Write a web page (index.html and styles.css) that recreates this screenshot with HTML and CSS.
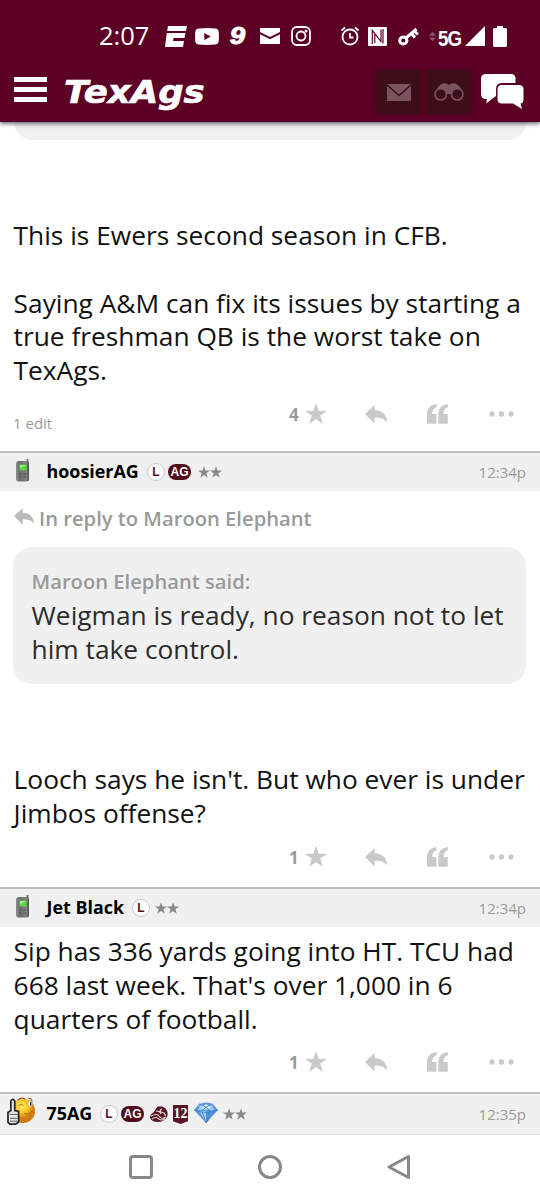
FILE: index.html
```html
<!DOCTYPE html>
<html lang="en">
<head>
<meta charset="utf-8">
<meta name="viewport" content="width=device-width">
<title>TexAgs</title>
<link rel="stylesheet" href="styles.css">
</head>
<body>
<svg class="defs" aria-hidden="true">
  <linearGradient id="case"><stop offset="0" stop-color="#8b8e8d"/><stop offset=".3" stop-color="#696d6c"/><stop offset=".8" stop-color="#808281"/><stop offset="1" stop-color="#474c4a"/></linearGradient>
  <radialGradient id="face" cx=".45" cy=".3"><stop offset="0" stop-color="#ffed68"/><stop offset=".6" stop-color="#f7c01e"/><stop offset="1" stop-color="#cd7d13"/></radialGradient>
  <symbol id="star" viewBox="0 0 22 21"><path d="M11 0l2.7 7.8H22l-6.7 4.8L17.8 21 11 15.9 4.2 21l2.5-8.4L0 7.800h8.300z"/></symbol>
  <symbol id="reply" viewBox="0 0 22 19"><path d="M0 9L9.600 0v5.200C17.500 5.500 22 9.500 22 17.300 19 13.500 15.500 12.500 9.600 12.700V18.500z"/></symbol>
  <symbol id="quote" viewBox="0 0 21 20"><path d="M9.500 0v3.500C6.500 4.300 5.300 6.200 5.200 10h4.300v9.700H0V11C0 4.500 3 .8 9.500 0z"/><path d="M20.800 0v3.500c-3 .8-4.200 2.700-4.300 6.500h4.300v9.700h-9.500V11c0-6.500 3-10.200 9.500-11z"/></symbol>
  <symbol id="dots" viewBox="0 0 26 6"><circle cx="3" cy="3" r="2.700"/><circle cx="12.500" cy="3" r="2.700"/><circle cx="22" cy="3" r="2.700"/></symbol>
  <symbol id="phone" viewBox="0 0 14 23"><path d="M10.500 0h2v3h-2z" fill="#777"/><rect y="2" width="13" height="20.500" rx="2.500" fill="url(#case)"/><path d="M3.500 5.500h7v6h-7z" fill="#5ed546"/><path d="M4 6h6L4 9z" fill="#a4ed8e"/><path d="M3 15h2.500m2 0H10m-7 3h2.500m2 0H10" stroke="#555957" stroke-width="1.200"/></symbol>
</svg>

<header class="top">
  <div class="status">
    <span class="clock">2:07</span>
    <svg class="s-espn" viewBox="0 0 22 21"><path d="M3 0h19l-1 5H2.200zM1.800 7h18.700l-1 5h-11l-.5 3h11l-1 6H0z"/></svg>
    <svg class="s-video" viewBox="0 0 24 17"><path fill-rule="evenodd" d="M4 .4Q12-.4 20 .4q3.500.2 3.700 3.600.5 4.500 0 9-.2 3.300-3.700 3.600-8 .8-16 0Q.5 16.300.3 13q-.5-4.500 0-9Q.5.600 4 .4zM9.300 5v7l6.500-3.500z"/></svg>
    <span class="nine">9</span>
    <svg class="s-mail" viewBox="0 0 20 16"><path d="M0 0h20v4l-10 5L0 4zM0 6.300l10 5 10-5V16H0z"/></svg>
    <svg class="s-camera" viewBox="0 0 20 20"><rect x="1" y="1" width="18" height="18" rx="5"/><circle cx="10" cy="10" r="4.500"/><circle cx="15" cy="5" r=".6"/></svg>
    <svg class="s-alarm" viewBox="0 0 20 20"><circle cx="10" cy="11" r="7.500"/><path d="M10 7v4.500h3.500M1.500 4.500L5 1.500m13.500 3L15 1.500"/></svg>
    <svg class="s-nfc" viewBox="0 0 19 19"><rect width="19" height="19" rx="1"/><path d="M4.300 17V3.500L13 14.500V2.500M6.800 16V7.500M15 16.500V2" fill="none" stroke="#5c0025" stroke-width="1.200"/></svg>
    <svg class="s-key" viewBox="0 0 21 19"><circle cx="5.300" cy="13.500" r="3.600"/><path d="M8 11L18.500 2m-5 4.500l3.500 4m-.7-6.500L20 7.500"/></svg>
    <svg class="s-updown" viewBox="0 0 8 11"><path d="M0 4.500L4 0l4 4.500zM0 6.500L4 11l4-4.500z"/></svg>
    <span class="fiveg">5G</span>
    <svg class="s-signal" viewBox="0 0 20 20"><path d="M20 0v20H0z"/></svg>
    <svg class="s-battery" viewBox="0 0 14 21"><path d="M4 0h6v2h2.500q1.500 0 1.500 1.500v16q0 1.500-1.500 1.500h-11Q0 21 0 19.500v-16Q0 2 1.500 2H4z"/></svg>
  </div>
  <nav class="bar">
    <div class="menu"><i></i><i></i><i></i></div>
    <span class="logo">TexAgs</span>
    <div class="tile"><svg class="t-mail" viewBox="0 0 24 17"><path d="M0 0h24L12 10.500zM0 2l12 10.500L24 2v15H0z"/></svg></div>
    <div class="tile"><svg class="t-eyes" viewBox="0 0 30 18"><path d="M3 6Q6 0 11 .2q3 0 3 1.500h2q0-1.500 3-1.500Q24 0 27 6l-9 5h-6z"/><circle cx="6.700" cy="11.300" r="5.700"/><circle cx="23.300" cy="11.300" r="5.700"/></svg></div>
    <svg class="chat" viewBox="0 0 43 35"><path d="M5 0h25q4.500 0 4.500 4.500V9H21q-6 0-6 6v7l-10 7.500 1-4.500H5q-5 0-5-5V5q0-5 5-5z"/><path d="M21 11h17q4.500 0 4.500 4.500V25q0 4.500-3 4.500L41 35l-9-5.500H21q-4.500 0-4.500-4.500v-9.500Q16.500 11 21 11z"/></svg>
  </nav>
</header>

<main>
  <article class="post post-first">
    <div class="quote-end"></div>
    <p class="text first-text">This is Ewers second season in CFB.<br><br>Saying A&amp;M can fix its issues by starting a<br>true freshman QB is the worst take on<br>TexAgs.</p>
    <div class="actions"><span class="edit">1 edit</span><b>4</b><svg class="a-star"><use href="#star"/></svg><svg class="a-reply"><use href="#reply"/></svg><svg class="a-quote"><use href="#quote"/></svg><svg class="a-dots"><use href="#dots"/></svg></div>
  </article>

  <article class="post post-second">
    <div class="author"><span class="avatar"><svg class="phone"><use href="#phone"/></svg></span><strong class="n1">hoosierAG</strong><span class="lb">L</span><span class="ag">AG</span><span class="stars"><svg><use href="#star"/></svg><svg><use href="#star"/></svg></span><time>12:34p</time></div>
    <div class="reply-to"><svg><use href="#reply"/></svg><span>In reply to Maroon Elephant</span></div>
    <blockquote><cite>Maroon Elephant said:</cite><p class="text">Weigman is ready, no reason not to let<br>him take control.</p></blockquote>
    <p class="text second-text">Looch says he isn't. But who ever is under<br>Jimbos offense?</p>
    <div class="actions"><b>1</b><svg class="a-star"><use href="#star"/></svg><svg class="a-reply"><use href="#reply"/></svg><svg class="a-quote"><use href="#quote"/></svg><svg class="a-dots"><use href="#dots"/></svg></div>
  </article>

  <article class="post post-third">
    <div class="author"><span class="avatar"><svg class="phone"><use href="#phone"/></svg></span><strong class="n2">Jet Black</strong><span class="lb">L</span><span class="stars tight"><svg><use href="#star"/></svg><svg><use href="#star"/></svg></span><time>12:34p</time></div>
    <p class="text third-text">Sip has 336 yards going into HT. TCU had<br>668 last week. That's over 1,000 in 6<br>quarters of football.</p>
    <div class="actions"><b>1</b><svg class="a-star"><use href="#star"/></svg><svg class="a-reply"><use href="#reply"/></svg><svg class="a-quote"><use href="#quote"/></svg><svg class="a-dots"><use href="#dots"/></svg></div>
  </article>

  <div class="author last"><span class="avatar"><svg class="thumb" viewBox="0 0 30 30"><circle cx="16.500" cy="14.500" r="12.500" fill="url(#face)"/><path d="M11 3.500q4-4 8-1m3-1q3-1 4 3" fill="none" stroke="#a95622" stroke-width="1.300"/><ellipse cx="24" cy="7" rx="2.300" ry="3.500" fill="#fff" stroke="#b98222" stroke-width=".6"/><path d="M24.500 5v4" stroke="#223" stroke-width="1.500"/><path d="M12 9q3-3 5 0M18 17q5 2 8-3" fill="none" stroke="#a66312"/><path d="M4 4q2-3 4 0v10l4 1v11l-3 2H3l-2-2V16l3-2z" fill="#e6e8e8" stroke="#262626" stroke-width="1.800"/><path d="M3 18h8m-8 4h8m-8 3h8" stroke="#555"/></svg></span><strong class="n3">75AG</strong><span class="lb">L</span><span class="ag">AG</span><svg class="ring" viewBox="0 0 19 17"><path d="M8 1q4-2 8 1 4 4 2 9-3 5-9 5-6 0-8-4 0-4 4-6z" fill="#5c1626"/><path d="M2 10q6-3 8 0 3 4 7 1M3 13q4-3 7 0 3 2 6 0M7 5q4 0 5 3M13 3q-3 1-1 3 5 1 4 4" fill="none" stroke="#e7dcde" stroke-width="1.200"/></svg><span class="shield">12</span><svg class="gem" viewBox="0 0 24 21"><path d="M5 2q7-3 14 0l5 6-12 13L0 8z" fill="#5c97e0"/><path d="M5 2L3 8h18l-2-6-7 2zM5 9l7 11V9z" fill="#9ccdf6"/><path d="M12 2l5 4H7z" fill="#e4f8ff"/><path d="M0 8q12 5 24 0M5 2l7 3 7-3M3 8l3-5m12 0l3 5-9 13M8 9l4 12M12 5l-4 4m4-4l4 4-4 12" fill="none" stroke="#3976c2" stroke-width=".7"/></svg><span class="stars tight"><svg><use href="#star"/></svg><svg><use href="#star"/></svg></span><time>12:35p</time></div>
</main>

<footer class="system-nav">
  <svg viewBox="0 0 26 26"><rect x="2.500" y="2.500" width="21" height="21" rx="2.500"/></svg>
  <svg viewBox="0 0 26 26"><circle cx="13" cy="13" r="10.500"/></svg>
  <svg viewBox="0 0 26 26"><path d="M22.500 2.500v21L3 13z"/></svg>
</footer>
</body>
</html>
```

FILE: styles.css
```css
* { box-sizing: border-box; }
body { margin: 0; width: 540px; height: 1200px; overflow: hidden; background: #fff; color: #111; font-family: "Open Sans", sans-serif; display: flex; flex-direction: column; }
p, blockquote { margin: 0; }
svg { display: block; flex: none; }
.defs { position: absolute; width: 0; height: 0; }

.top { height: 122px; flex: none; background: #5c0025; box-shadow: 0 2px 4px #0008; position: relative; color: #fff; }
.status { height: 64px; padding: 8px 0 0 99px; display: flex; align-items: center; fill: #fff; white-space: nowrap; }
.clock { width: 66px; font-size: 25.5px; line-height: 30px; font-weight: 400; margin-top: -2px; }
.s-espn { width: 22px; height: 21px; }
.s-video { width: 24px; height: 17px; margin-left: 8px; }
.nine { width: 17px; margin: 0 0 0 12px; font: italic 700 24px/28px "Liberation Sans", Arial, sans-serif; -webkit-text-stroke: 1px #fff; transform: scaleX(1.15); }
.s-mail { width: 20px; height: 16px; margin-left: 12px; }
.s-camera { width: 20px; height: 20px; margin-left: 11px; }
.s-camera, .s-alarm, .s-key { fill: none; stroke: #fff; stroke-width: 1.8; }
.s-alarm { width: 20px; height: 20px; margin-left: 29px; }
.s-nfc { width: 19px; height: 19px; margin-left: 8px; }
.s-key { width: 21px; height: 19px; margin-left: 11px; stroke-width: 3; }
.s-updown { width: 7px; height: 11px; margin-left: 10px; fill: #92536b; }
.fiveg { width: 27px; margin: 5px 0 0 2px; font: 700 22px/24px "Liberation Sans", Arial, sans-serif; letter-spacing: -1px; transform: scaleX(.85); transform-origin: left; }
.s-signal { width: 20px; height: 20px; }
.s-battery { width: 14px; height: 21px; margin-left: 8px; }

.bar { height: 58px; display: flex; align-items: center; padding-left: 14px; }
.menu { width: 33px; display: grid; gap: 5px; margin-top: -7px; }
.menu i { height: 5px; background: #fff; }
.logo { width: 313px; margin: -3px 0 0 17px; font: italic 700 32px/40px "DejaVu Sans", sans-serif; -webkit-text-stroke: .6px #fff; transform: scaleX(1.11); transform-origin: left; }
.tile { width: 44px; height: 44px; margin: -2px 6px 0 0; background: #3d0e18; border-radius: 3px; display: flex; align-items: center; justify-content: center; box-shadow: 0 0 3px #3d0e18; }
.tile svg { fill: #795460; }
.t-mail { width: 24px; height: 17px; }
.t-eyes { width: 30px; height: 18px; }
.t-eyes circle { fill: #3d0e18; stroke: #795460; stroke-width: 1.6; }
.chat { width: 43px; height: 35px; margin: -3px 0 0 4px; fill: #fff; }

.post { display: flex; flex-direction: column; }
.post-first { height: 329px; }
.post-second { height: 436px; }
.post-third { height: 205px; }
.quote-end { height: 18px; margin: 0 14px; background: #f0f0f0; border-radius: 0 0 18px 18px; flex: none; }
.text { font-size: 26.3px; line-height: 33.75px; white-space: nowrap; color: #111; }
.first-text { margin: 79px 0 0 13.6px; }
.actions { display: flex; align-items: center; height: 30px; padding-left: 289px; margin-top: auto; margin-bottom: 22px; fill: #c9c9c9; flex: none; }
.post-second .actions, .post-third .actions { margin-bottom: 15px; }
.actions b { width: 16px; font-size: 17px; font-weight: 700; color: #999; line-height: 20px; margin-top: 1px; }
.edit { width: 275px; margin: 17px 0 0 -276px; padding-right: 1px; color: #999; font-size: 15px; line-height: 18px; }
.edit + b { margin-left: 1px; }
.a-star { width: 22px; height: 21px; margin-top: -1px; }
.a-reply { width: 22px; height: 19px; margin-left: 38px; }
.a-quote { width: 21px; height: 20px; margin-left: 40px; margin-top: -1px; }
.a-dots { width: 26px; height: 6px; margin-left: 41px; }

.author { height: 40px; flex: none; display: flex; align-items: center; padding-right: 14px; background: #f0f0f0; border-top: 2px solid #bebebe; }
.avatar { width: 46.5px; padding-left: 16px; flex: none; }
.phone { width: 14px; height: 23px; margin-top: -3px; }
.author strong { font-size: 17.9px; line-height: 24px; font-weight: 700; color: #000; white-space: nowrap; margin-top: -2px; }
.n1 { width: 100.5px; }
.n2 { width: 85.5px; }
.n3 { width: 53.5px; }
.lb { width: 18px; height: 18px; border: 1px solid #cbcbcb; border-radius: 50%; background: #fff; color: #541420; font: 700 12px/16px "Liberation Sans", Arial, sans-serif; text-align: center; margin-top: -1px; }
.ag { width: 23px; height: 16px; margin: -1px 0 0 3px; border-radius: 8px; background: #500b1b; color: #fff; font: 700 12px/16px "Liberation Sans", Arial, sans-serif; text-align: center; }
.stars { display: flex; margin-left: 7px; fill: #888; }
.stars.tight { margin-left: 5px; }
.stars svg { width: 12px; height: 12px; }
time { margin-left: auto; color: #999; font-size: 15px; line-height: 22px; margin-top: -1px; }
.reply-to { display: flex; align-items: center; gap: 5px; padding-left: 14px; margin-top: 13px; height: 28px; color: #999; font-weight: 600; font-size: 20.2px; fill: #bbb; white-space: nowrap; }
.reply-to svg { width: 20px; height: 17px; margin-top: -4px; }
blockquote { width: 513px; height: 137px; margin: 15px 0 0 13px; padding: 20px 18.6px 0; border-radius: 19px; background: #f0f0f0; }
cite { display: block; font-style: normal; font-weight: 600; font-size: 20.2px; line-height: 28px; color: #999; }
blockquote .text { color: #2c2c2c; margin-top: 4px; }
.second-text { margin: 79px 0 0 13.6px; }
.third-text { margin: 8px 0 0 13.6px; }
.last { height: 43px; border-bottom: 1px solid #ddd; }
.last .avatar { padding-left: 7px; }
.thumb { width: 29px; height: 29px; margin-top: -5px; }
.ring { width: 19px; height: 17px; margin-left: 5px; }
.shield { width: 15px; height: 19px; margin: 1px 0 0 5px; background: #5a1525; color: #fff; font: 700 14px/17px "Liberation Serif", serif; text-align: center; clip-path: polygon(0 0, 100% 0, 100% 85%, 50% 100%, 0 85%); }
.gem { width: 24px; height: 21px; margin: -3px 0 0 6px; }
.system-nav { flex: 1; display: flex; align-items: center; justify-content: center; gap: 103px; padding-bottom: 1px; fill: none; stroke: #888; stroke-width: 3; stroke-linejoin: round; }
.system-nav svg { width: 26px; height: 26px; }
```
